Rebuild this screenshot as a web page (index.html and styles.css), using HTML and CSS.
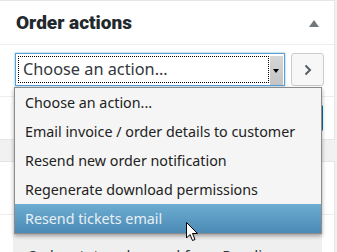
FILE: index.html
```html
<!DOCTYPE html>
<html lang="en">
<head>
    <meta charset="UTF-8">
    <title>Order actions</title>
    <link rel="stylesheet" href="styles.css">
</head>
<body>
    <div class="postbox">
        <div class="postbox-header">
            <h2>Order actions</h2>
            <span class="toggle-indicator"></span>
        </div>
        <ul class="order-actions">
            <li class="action-row">
                <div class="fake-select">
                    <span class="focus-ring">Choose an action...</span>
                    <span class="select-arrow"></span>
                </div>
                <button class="go-button" type="button">
                    <svg width="10" height="12" viewBox="0 0 10 12"><polyline points="2.5,1.5 7,6 2.5,10.5" fill="none" stroke="#555d66" stroke-width="2"/></svg>
                </button>
            </li>
            <li class="submit-row">
                <a class="trash-link" href="#">Move to Trash</a>
                <button class="button-primary" type="button">Update</button>
            </li>
        </ul>
    </div>

    <div class="postbox">
        <div class="postbox-header tall">
            <h2>Order notes</h2>
        </div>
        <div class="notes">
            <div class="note-content">Order status changed from Pending payment to Processing.</div>
        </div>
    </div>

    <!-- open select dropdown, drawn over the boxes -->
    <ul class="dropdown">
        <li>Choose an action...</li>
        <li>Email invoice / order details to customer</li>
        <li>Resend new order notification</li>
        <li>Regenerate download permissions</li>
        <li class="active">Resend tickets email</li>
    </ul>

    <svg class="cursor" width="13" height="20" viewBox="0 0 13 20">
        <path d="M0.5,0.5 L0.5,16 L4,12.5 L6.5,18.5 L9,17.5 L6.5,11.5 L11.5,11.5 Z" fill="#fff" stroke="#000" stroke-width="1"/>
    </svg>
</body>
</html>
```

FILE: styles.css
```css
body {
    margin: 0;
    background: #f1f1f1;
    font-family: "Noto Sans", sans-serif;
    color: #23282d;
    overflow: hidden;
}
ul {
    list-style: none;
    margin: 0;
    padding: 0;
}
.postbox {
    width: 334px;
    margin-left: -1px;
    background: #fff;
    border: 1px solid #e5e5e5;
    margin-bottom: 21px;
}
.postbox-header {
    display: flex;
    align-items: center;
    justify-content: space-between;
    height: 43px;
    padding: 0 15px 0 16px;
    border-bottom: 1px solid #eee;
}
.postbox-header.tall {
    height: 52px;
}
.postbox-header h2 {
    margin: 0;
    font-family: Roboto, sans-serif;
    font-size: 19px;
    font-weight: 900;
    color: #23282d;
}
.toggle-indicator {
    width: 0;
    height: 0;
    border-left: 5px solid transparent;
    border-right: 5px solid transparent;
    border-bottom: 7px solid #72777c;
    margin-top: 2px;
}
.action-row {
    display: flex;
    align-items: center;
    gap: 6px;
    padding: 8px 0 10px 15px;
    border-bottom: 1px solid #eee;
}
.fake-select {
    position: relative;
    width: 268px;
    height: 31px;
    border: 1px solid #5b9dd9;
    box-shadow: 0 0 2px rgba(30, 140, 190, 0.6);
    background: #fff;
    display: flex;
    align-items: center;
}
.focus-ring {
    display: block;
    margin: 2px 15px 2px 2px;
    flex: 1;
    height: 25px;
    line-height: 25px;
    padding-left: 4px;
    border: 1px dotted #000;
    font-size: 16.3px;
    color: #32373c;
}
.select-arrow {
    position: absolute;
    right: 1px;
    top: 2px;
    width: 13px;
    height: 29px;
    background: linear-gradient(#d6d6d6, #c4c4c4);
}
.select-arrow::after {
    content: "";
    position: absolute;
    left: 3px;
    top: 13px;
    border-left: 3px solid transparent;
    border-right: 3px solid transparent;
    border-top: 4px solid #000;
}
.go-button {
    width: 33px;
    height: 33px;
    border: 1px solid #ccc;
    border-radius: 3px;
    background: #f7f7f7;
    display: flex;
    align-items: center;
    justify-content: center;
    padding: 0;
}
.submit-row {
    display: flex;
    justify-content: space-between;
    align-items: center;
    height: 42px;
    padding: 0 11px 0 14px;
}
.trash-link {
    color: #a00;
    font-size: 14px;
}
.button-primary {
    background: #0085ba;
    border: 1px solid #0073aa;
    border-radius: 3px;
    color: #fff;
    height: 28px;
    padding: 0 12px;
    font-size: 14px;
}
.notes {
    padding: 18px 12px 0 13px;
}
.note-content {
    background: #efefef;
    padding: 12px 14px;
    font-size: 15px;
    color: #32373c;
}
.dropdown {
    position: absolute;
    left: 14px;
    top: 87px;
    width: 306px;
    background: #f5f5f5;
    border: 1px solid #8c8c8c;
    box-shadow: 0 2px 4px rgba(0, 0, 0, 0.35);
}
.dropdown li {
    height: 29px;
    line-height: 29px;
    padding-left: 10px;
    font-size: 14.3px;
    color: #222;
    white-space: nowrap;
}
.dropdown li.active {
    background: linear-gradient(#6eadd1, #4a8ab4);
    color: #e8eff5;
}
.cursor {
    position: absolute;
    left: 186px;
    top: 222px;
}
```
